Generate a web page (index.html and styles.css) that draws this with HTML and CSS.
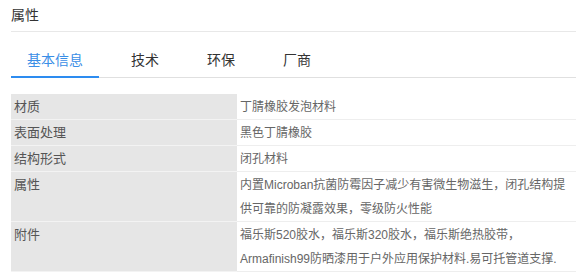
FILE: index.html
```html
<!DOCTYPE html>
<html lang="zh-CN">
<head>
<meta charset="utf-8">
<link rel="stylesheet" href="styles.css">
</head>
<body>
<div class="panel">
  <div class="title">属性</div>
  <div class="tabs">
    <div class="tab active">基本信息</div>
    <div class="tab">技术</div>
    <div class="tab">环保</div>
    <div class="tab">厂商</div>
  </div>
  <table class="props">
    <tr><td class="label">材质</td><td class="value">丁腈橡胶发泡材料</td></tr>
    <tr><td class="label">表面处理</td><td class="value">黑色丁腈橡胶</td></tr>
    <tr><td class="label">结构形式</td><td class="value">闭孔材料</td></tr>
    <tr><td class="label">属性</td><td class="value">内置Microban抗菌防霉因子减少有害微生物滋生，闭孔结构提供可靠的防凝露效果，零级防火性能</td></tr>
    <tr><td class="label">附件</td><td class="value">福乐斯520胶水，福乐斯320胶水，福乐斯绝热胶带，Armafinish99防晒漆用于户外应用保护材料.易可托管道支撑.</td></tr>
  </table>
</div>
</body>
</html>
```

FILE: styles.css
```css
html, body {
  margin: 0;
  padding: 0;
  background: #fff;
}
body {
  font-family: "Liberation Sans", "Noto Sans CJK SC", sans-serif;
  color: #333;
}
.panel {
  padding-left: 11px;
}
.title {
  font-size: 14px;
  line-height: 20px;
  padding-top: 5px;
  padding-bottom: 6px;
  border-bottom: 1px solid #e8e8e8;
  color: #333;
}
.tabs {
  display: flex;
  border-bottom: 1px solid #e0e0e0;
}
.tab {
  font-size: 14px;
  line-height: 20px;
  padding: 18px 16px 6px;
  margin-right: 16px;
  margin-bottom: -1px;
  border-bottom: 2px solid transparent;
  color: #333;
}
.tab.active {
  color: #3a8ee6;
  border-bottom-color: #2d8cf0;
}
.props {
  margin-top: 16px;
  width: 565px;
  border-collapse: collapse;
  table-layout: fixed;
}
.props td {
  vertical-align: top;
  line-height: 24px;
  padding: 1px 4px 0 3px;
  border-bottom: 1px solid #eeeeee;
}
.label {
  width: 219px;
  background: #e6e6e6;
  color: #555;
  font-size: 13px;
  border-bottom-color: #f3f3f3 !important;
}
.value {
  color: #666;
  font-size: 12px;
}
```
